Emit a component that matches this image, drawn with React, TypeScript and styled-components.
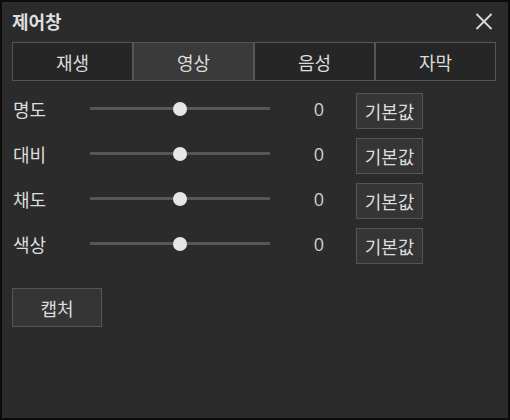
import React, { useState } from "react";
import styled, { createGlobalStyle } from "styled-components";

const Global = createGlobalStyle`
  html, body { margin: 0; padding: 0; background: #000; }
  * { box-sizing: border-box; }
  body { font-family: "Noto Sans CJK KR", "Noto Sans", sans-serif; }
`;

const Panel = styled.div`
  width: 510px;
  height: 420px;
  border: 2px solid #0c0c0c;
  background: #2b2b2b;
  color: #dcdcdc;
  padding: 0 12px 0 10px;
  display: flex;
  flex-direction: column;
`;

const Header = styled.div`
  height: 40px;
  display: flex;
  align-items: center;
  justify-content: space-between;
`;

const Title = styled.div`
  font-size: 18px;
  font-weight: 700;
  color: #dedede;
  padding-left: 0;
  margin-top: -2px;
`;

const CloseButton = styled.button`
  background: none;
  border: none;
  padding: 0;
  width: 20px;
  height: 20px;
  display: flex;
  align-items: center;
  justify-content: center;
  cursor: pointer;
  margin-right: 2px;
  margin-top: -2px;
`;

const Tabs = styled.div`
  display: grid;
  grid-template-columns: repeat(4, 121px);
  height: 39px;
`;

const Tab = styled.button<{ $active?: boolean }>`
  border: 1px solid #565656;
  background: ${(p) => (p.$active ? "#3a3a3a" : "#262626")};
  color: #dcdcdc;
  font-family: inherit;
  font-size: 18px;
  padding: 0;
  cursor: pointer;
`;

const Rows = styled.div`
  display: flex;
  flex-direction: column;
  gap: 9px;
  margin-top: 12px;
`;

const Row = styled.div`
  display: grid;
  grid-template-columns: 78px 180px 86px 67px;
  align-items: center;
  height: 36px;
`;

const Label = styled.span`
  font-size: 18px;
  padding-left: 1px;
  margin-top: -5px;
  color: #dcdcdc;
`;

const Track = styled.div`
  position: relative;
  height: 3px;
  background: #575757;
  margin-top: -5px;
`;

const Thumb = styled.div`
  position: absolute;
  top: 50%;
  width: 14px;
  height: 14px;
  border-radius: 50%;
  background: #e6e6e6;
  transform: translate(-50%, -50%);
`;

const Value = styled.span`
  font-family: "Open Sans", "Noto Sans", sans-serif;
  font-size: 18px;
  text-align: center;
  padding-left: 12px;
  margin-top: -5px;
  color: #cfcfcf;
`;

const Button = styled.button<{ $w?: number; $h?: number }>`
  width: ${(p) => p.$w ?? 67}px;
  height: ${(p) => p.$h ?? 36}px;
  border: 1px solid #555;
  background: #353535;
  color: #dcdcdc;
  font-family: inherit;
  font-size: 18px;
  padding: 0;
  cursor: pointer;
`;

const Footer = styled.div`
  margin-top: 24px;
`;

const tabs = ["재생", "영상", "음성", "자막"];
const sliders = ["명도", "대비", "채도", "색상"];

export default function App() {
  const [active, setActive] = useState(1);
  return (
    <>
      <Global />
      <Panel>
        <Header>
          <Title>제어창</Title>
          <CloseButton aria-label="close">
            <svg width="18" height="17" viewBox="0 0 18 17">
              <path d="M1.5 1 L16.5 16 M16.5 1 L1.5 16" stroke="#dcdcdc" strokeWidth="1.8" fill="none" />
            </svg>
          </CloseButton>
        </Header>
        <Tabs>
          {tabs.map((t, i) => (
            <Tab key={t} $active={i === active} onClick={() => setActive(i)}>
              {t}
            </Tab>
          ))}
        </Tabs>
        <Rows>
          {sliders.map((s) => (
            <Row key={s}>
              <Label>{s}</Label>
              <Track>
                <Thumb style={{ left: "50%" }} />
              </Track>
              <Value>0</Value>
              <Button>기본값</Button>
            </Row>
          ))}
        </Rows>
        <Footer>
          <Button $w={90} $h={39}>캡처</Button>
        </Footer>
      </Panel>
    </>
  );
}
